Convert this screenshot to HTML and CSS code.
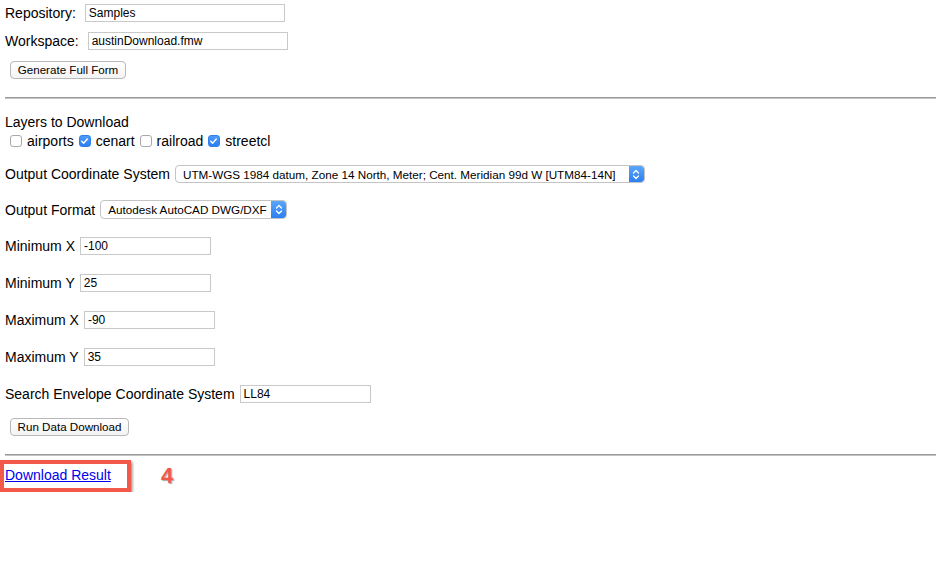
FILE: index.html
```html
<!DOCTYPE html>
<html lang="en">

<head>
	<meta charset="UTF-8">
	<title>Data Download</title>
	<link rel="stylesheet" href="styles.css">
</head>

<body>
	<div class="field first">
		<label class="wide">Repository:</label>
		<input type="text" class="text long" value="Samples">
	</div>
	<div class="field ws">
		<label class="wide">Workspace:</label>
		<input type="text" class="text long" value="austinDownload.fmw">
	</div>
	<button class="btn gen">Generate Full Form</button>

	<hr class="rule">

	<div class="layers-title">Layers to Download</div>
	<div class="layers">
		<span class="check"></span><span class="layer">airports</span>
		<span class="check on"><svg width="12" height="12" viewBox="0 0 12 12"><path d="M3 6.2 L5.1 8.3 L9 3.8" fill="none" stroke="#fff" stroke-width="1.6" stroke-linecap="round" stroke-linejoin="round"/></svg></span><span class="layer">cenart</span>
		<span class="check"></span><span class="layer">railroad</span>
		<span class="check on"><svg width="12" height="12" viewBox="0 0 12 12"><path d="M3 6.2 L5.1 8.3 L9 3.8" fill="none" stroke="#fff" stroke-width="1.6" stroke-linecap="round" stroke-linejoin="round"/></svg></span><span class="layer">streetcl</span>
	</div>

	<div class="field coord">
		<label>Output Coordinate System</label>
		<div class="select cs">
			<select><option>UTM-WGS 1984 datum, Zone 14 North, Meter; Cent. Meridian 99d W [UTM84-14N]</option></select>
			<span class="arrows"><svg width="8" height="11" viewBox="0 0 8 11"><path d="M1.5 4 L4 1.5 L6.5 4 M1.5 7 L4 9.5 L6.5 7" fill="none" stroke="#fff" stroke-width="1.3" stroke-linecap="round" stroke-linejoin="round"/></svg></span>
		</div>
	</div>

	<div class="field fmt">
		<label>Output Format</label>
		<div class="select of">
			<select><option>Autodesk AutoCAD DWG/DXF</option></select>
			<span class="arrows"><svg width="8" height="11" viewBox="0 0 8 11"><path d="M1.5 4 L4 1.5 L6.5 4 M1.5 7 L4 9.5 L6.5 7" fill="none" stroke="#fff" stroke-width="1.3" stroke-linecap="round" stroke-linejoin="round"/></svg></span>
		</div>
	</div>

	<div class="field minx">
		<label>Minimum X</label>
		<input type="text" class="text short" value="-100">
	</div>
	<div class="field row">
		<label>Minimum Y</label>
		<input type="text" class="text short" value="25">
	</div>
	<div class="field row">
		<label>Maximum X</label>
		<input type="text" class="text short" value="-90">
	</div>
	<div class="field row">
		<label>Maximum Y</label>
		<input type="text" class="text short" value="35">
	</div>
	<div class="field row">
		<label>Search Envelope Coordinate System</label>
		<input type="text" class="text short" value="LL84">
	</div>
	<button class="btn run">Run Data Download</button>

	<hr class="rule second">

	<div class="result">
		<div class="highlight"><a href="#">Download Result</a></div>
		<span class="step">4</span>
	</div>
</body>

</html>
```

FILE: styles.css
```css
body {
	margin: 0;
	padding: 0 0 0 5px;
	font-family: "Liberation Sans", Arial, sans-serif;
	font-size: 14px;
	color: #000;
	background-color: #fff;
}

.field {
	display: flex;
	align-items: center;
	gap: 5px;
	height: 18px;
}

.field.first {
	margin-top: 4px;
}

.field.ws {
	margin-top: 10px;
}

.field .wide {
	margin-right: 4px;
}

.text {
	box-sizing: border-box;
	height: 18px;
	margin: 0;
	padding: 0 3px;
	border: 1px solid #c9c9c9;
	font-family: "Liberation Sans", Arial, sans-serif;
	font-size: 12px;
	color: #000;
	outline: none;
}

.long {
	width: 200px;
}

.short {
	width: 131px;
}

.btn {
	display: block;
	box-sizing: border-box;
	height: 18px;
	margin: 0 0 0 5px;
	padding: 0 6px 1px;
	border: 1px solid #b8b8b8;
	border-radius: 4px;
	background: linear-gradient(#ffffff, #f3f3f3);
	font-family: "Liberation Sans", Arial, sans-serif;
	font-size: 11.6px;
	color: #000;
}

.gen {
	margin-top: 11px;
	width: 116px;
}

.run {
	margin-top: 15px;
	width: 119px;
}

.rule {
	height: 0;
	margin: 18px 0 0 0;
	border: none;
	border-top: 1px solid #9a9a9a;
	border-bottom: 1px solid #c4c4c4;
}

.rule.second {
	margin-top: 18px;
}

.layers-title {
	margin-top: 15px;
	line-height: 16px;
}

.layers {
	display: flex;
	align-items: center;
	height: 16px;
	margin-top: 3px;
	padding-left: 5px;
}

.check {
	box-sizing: border-box;
	display: inline-flex;
	width: 12px;
	height: 12px;
	border: 1px solid #a9a9a9;
	border-radius: 3px;
	background-color: #fff;
}

.check.on {
	border-color: #2f80ee;
	background: linear-gradient(#4b9bf9, #2e7ff0);
}

.check.on svg {
	margin: -1px 0 0 -1px;
}

.layer {
	margin: 0 5px 0 5px;
}

.coord {
	margin-top: 16px;
}

.fmt {
	margin-top: 17px;
	height: 19px;
}

.select {
	box-sizing: border-box;
	display: flex;
	height: 100%;
	border: 1px solid #c4c4c4;
	border-radius: 4px;
	background-color: #fff;
	overflow: hidden;
}

.select select {
	flex: 1;
	min-width: 0;
	margin: 0;
	padding: 0 0 0 7px;
	border: none;
	background: transparent;
	-webkit-appearance: none;
	appearance: none;
	font-family: "Liberation Sans", Arial, sans-serif;
	font-size: 11.7px;
	color: #000;
	outline: none;
}

.arrows {
	display: flex;
	align-items: center;
	justify-content: center;
	width: 15px;
	background: linear-gradient(#5aa7fb, #2d7ef0);
	border-radius: 0 3px 3px 0;
}

.cs {
	width: 470px;
}

.of {
	width: 187px;
}

.minx {
	margin-top: 18px;
}

.row {
	margin-top: 19px;
}

.result {
	display: flex;
	align-items: center;
	margin: 4px 0 0 -5px;
}

.highlight {
	box-sizing: border-box;
	width: 131px;
	height: 32px;
	padding: 3px 0 0 1px;
	border: 4px solid #f2594b;
	box-shadow: 1px 2px 3px rgba(0, 0, 0, 0.55);
}

.highlight a {
	color: #0000ee;
	text-decoration: underline;
}

.step {
	margin-left: 30px;
	font-size: 22px;
	font-weight: bold;
	color: #f2594b;
	text-shadow: 1px 1px 1px rgba(0, 0, 0, 0.35);
}
```
